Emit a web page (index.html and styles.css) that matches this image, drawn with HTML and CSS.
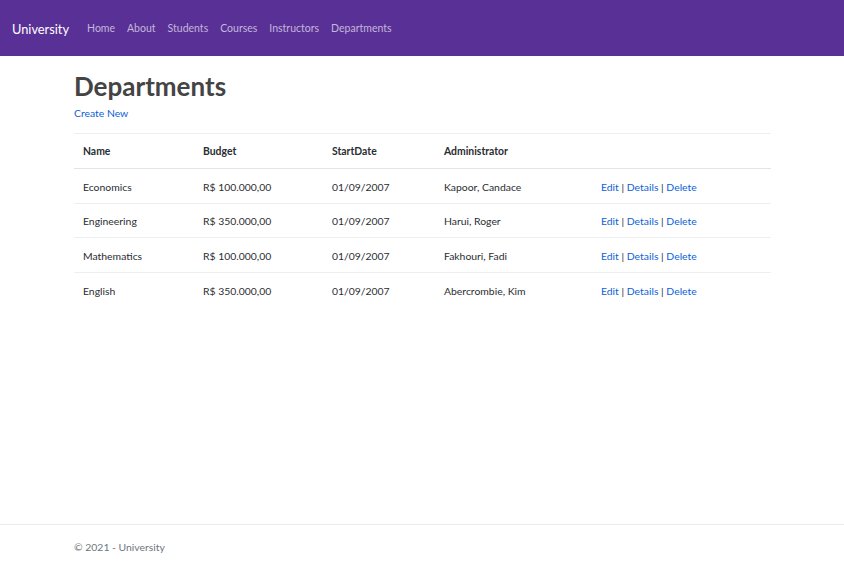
FILE: index.html
```html
<!DOCTYPE html>
<html>
<head>
<meta charset="utf-8">
<link rel="stylesheet" href="styles.css">
</head>
<body>
<header class="navbar">
  <a class="brand" href="#">University</a>
  <nav class="nav">
    <a href="#">Home</a>
    <a href="#">About</a>
    <a href="#">Students</a>
    <a href="#">Courses</a>
    <a href="#">Instructors</a>
    <a href="#">Departments</a>
  </nav>
</header>
<main class="container">
  <h1 class="title">Departments</h1>
  <p class="create"><a href="#">Create New</a></p>
  <table class="table">
    <colgroup>
      <col class="c1"><col class="c2"><col class="c3"><col class="c4"><col class="c5">
    </colgroup>
    <thead>
      <tr><th>Name</th><th>Budget</th><th>StartDate</th><th>Administrator</th><th></th></tr>
    </thead>
    <tbody>
      <tr><td>Economics</td><td>R$ 100.000,00</td><td>01/09/2007</td><td>Kapoor, Candace</td><td><a href="#">Edit</a> | <a href="#">Details</a> | <a href="#">Delete</a></td></tr>
      <tr><td>Engineering</td><td>R$ 350.000,00</td><td>01/09/2007</td><td>Harui, Roger</td><td><a href="#">Edit</a> | <a href="#">Details</a> | <a href="#">Delete</a></td></tr>
      <tr><td>Mathematics</td><td>R$ 100.000,00</td><td>01/09/2007</td><td>Fakhouri, Fadi</td><td><a href="#">Edit</a> | <a href="#">Details</a> | <a href="#">Delete</a></td></tr>
      <tr><td>English</td><td>R$ 350.000,00</td><td>01/09/2007</td><td>Abercrombie, Kim</td><td><a href="#">Edit</a> | <a href="#">Details</a> | <a href="#">Delete</a></td></tr>
    </tbody>
  </table>
</main>
<footer class="footer">
  <div class="footer-inner">&copy; 2021 - University</div>
</footer>
</body>
</html>
```
FILE: styles.css
```css
* { box-sizing: border-box; }
html, body { margin: 0; padding: 0; height: 100%; }
body {
  font-family: "Lato", "Noto Sans", sans-serif;
  font-size: 10.4px;
  color: #2a2d31;
  background: #fff;
  display: flex;
  flex-direction: column;
  min-height: 570px;
}
a { color: #0d5fd8; text-decoration: none; }

.navbar {
  height: 56px;
  background: #593196;
  display: flex;
  align-items: center;
  padding: 0 12px;
  flex-shrink: 0;
}
.brand {
  color: #fff;
  font-size: 12.8px;
  margin-right: 18px;
  padding-top: 2px;
}
.nav { display: flex; gap: 12px; }
.nav a { color: #c4b5dd; font-size: 10.5px; }

.container {
  flex: 1;
  padding: 0 73px 0 74px;
}
.title {
  font-size: 26px;
  font-weight: 700;
  color: #444;
  margin: 14px 0 4px;
  line-height: 32px;
}
.create { margin: 0 0 13px; line-height: 14px; }

.table {
  width: 697px;
  border-collapse: collapse;
}
.c1 { width: 120px; }
.c2 { width: 129px; }
.c3 { width: 112px; }
.c4 { width: 157px; }
.c5 { width: 179px; }
.table th, .table td {
  text-align: left;
  padding: 0 9px;
  height: 34.5px;
  border-top: 1px solid #eceef0;
  vertical-align: middle;
}
.table td { padding-top: 2px; }
.table th { font-weight: 700; height: 35px; }
.table thead th { border-bottom: 1px solid #e2e4e7; }

.footer {
  border-top: 1px solid #ebebeb;
  height: 46px;
  flex-shrink: 0;
}
.footer-inner {
  padding: 16px 0 0 74px;
  color: #6c757d;
}
```
